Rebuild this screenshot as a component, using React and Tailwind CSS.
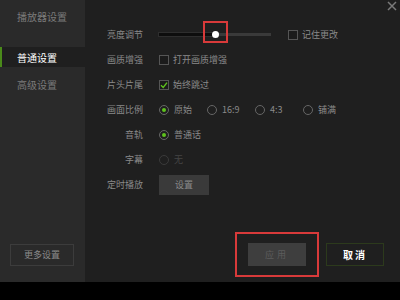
const font = { fontFamily: '"Noto Sans CJK SC", "Noto Sans", sans-serif' };

function Check({ checked }) {
  return (
    <span className="flex h-[10px] w-[10px] items-center justify-center border border-[#555] bg-[#1b1b1b]">
      {checked && (
        <svg width="8" height="8" viewBox="0 0 8 8">
          <path d="M1 4.2 L3.2 6.4 L7 1.6" fill="none" stroke="#5ec21d" strokeWidth="1.4" />
        </svg>
      )}
    </span>
  );
}

function Radio({ on, disabled }) {
  return (
    <span
      className={`flex h-[10px] w-[10px] items-center justify-center rounded-full border ${
        disabled ? "border-[#3a3a3a]" : "border-[#666]"
      }`}
    >
      {on && <span className="h-[4px] w-[4px] rounded-full bg-[#5ec21d]" />}
    </span>
  );
}

function Row({ label, children }) {
  return (
    <div className="flex h-[25px] items-center">
      <div className="w-[58px] text-right text-[9px] text-[#8a8a8a]">{label}</div>
      <div className="ml-[16px] flex items-center">{children}</div>
    </div>
  );
}

export default function App() {
  return (
    <div className="flex h-[300px] w-[400px] flex-col bg-black" style={font}>
      <div className="flex h-[282px]">
        {/* sidebar */}
        <div className="flex w-[85px] flex-col bg-[#2a2a2a]">
          <div className="h-[47px] pl-[17px] pt-[9px] text-[10px] text-[#7a7a7a]">播放器设置</div>
          <div className="flex h-[20px] items-center border-l-2 border-[#4a8a1a] bg-[#1f1f1f] pl-[15px] text-[10px] text-white">
            普通设置
          </div>
          <div className="flex h-[34px] items-center pl-[17px] text-[10px] text-[#7a7a7a]">高级设置</div>
          <div className="flex-1" />
          <div className="mb-[16px] ml-[10px] flex h-[22px] w-[64px] items-center justify-center border border-[#3c3c3c] text-[9px] text-[#8a8a8a]">
            更多设置
          </div>
        </div>

        {/* main */}
        <div className="relative flex flex-1 flex-col bg-[#1f1f1f] pt-[22px]">
          <svg className="absolute right-[3px] top-[1px]" width="10" height="10" viewBox="0 0 10 10">
            <path d="M1 1 L9 9 M9 1 L1 9" stroke="#7a7a7a" strokeWidth="1.5" />
          </svg>

          <Row label="亮度调节">
            <div className="relative flex h-[3px] w-[112px] items-center">
              <div className="h-[3px] w-[56px] bg-[#0d0d0d] ring-1 ring-[#2e2e2e]" />
              <div className="h-[3px] flex-1 bg-[#3a3a3a]" />
              <span className="absolute left-[53px] top-[-2px] h-[7px] w-[7px] rounded-full bg-white" />
              <span className="absolute left-[44px] top-[-12px] h-[22px] w-[25px] border-2 border-[#d83a3a]" />
            </div>
            <div className="ml-[17px] flex items-center gap-[4px]">
              <Check />
              <span className="text-[9px] text-[#8a8a8a]">记住更改</span>
            </div>
          </Row>
          <Row label="画质增强">
            <div className="flex items-center gap-[4px]">
              <Check />
              <span className="text-[9px] text-[#8a8a8a]">打开画质增强</span>
            </div>
          </Row>
          <Row label="片头片尾">
            <div className="flex items-center gap-[4px]">
              <Check checked />
              <span className="text-[9px] text-[#8a8a8a]">始终跳过</span>
            </div>
          </Row>
          <Row label="画面比例">
            <div className="flex items-center">
              <div className="flex w-[48px] items-center gap-[5px]">
                <Radio on />
                <span className="text-[9px] text-[#8a8a8a]">原始</span>
              </div>
              <div className="flex w-[48px] items-center gap-[5px]">
                <Radio />
                <span className="text-[9px] text-[#8a8a8a]">16:9</span>
              </div>
              <div className="flex w-[48px] items-center gap-[5px]">
                <Radio />
                <span className="text-[9px] text-[#8a8a8a]">4:3</span>
              </div>
              <div className="flex items-center gap-[5px]">
                <Radio />
                <span className="text-[9px] text-[#8a8a8a]">铺满</span>
              </div>
            </div>
          </Row>
          <Row label="音轨">
            <div className="flex items-center gap-[5px]">
              <Radio on />
              <span className="text-[9px] text-[#8a8a8a]">普通话</span>
            </div>
          </Row>
          <Row label="字幕">
            <div className="flex items-center gap-[5px]">
              <Radio disabled />
              <span className="text-[9px] text-[#444]">无</span>
            </div>
          </Row>
          <Row label="定时播放">
            <div className="flex h-[20px] w-[50px] items-center justify-center bg-[#3a3a3a] text-[9px] text-[#8a8a8a]">
              设置
            </div>
          </Row>

          <div className="flex-1" />
          <div className="mb-[5px] flex items-center justify-end pr-[16px]">
            <div className="flex h-[45px] w-[84px] items-center justify-center border-2 border-[#d83a3a]">
              <div className="flex h-[23px] w-[58px] items-center justify-center bg-[#3e3e3e] text-[9px] tracking-[3px] text-[#5c5c5c]">
                应用
              </div>
            </div>
            <div className="ml-[7px] flex h-[23px] w-[58px] items-center justify-center border border-[#2c3a1c] text-[10px] font-bold tracking-[2px] text-white">
              取消
            </div>
          </div>
        </div>
      </div>
      <div className="flex-1 bg-black" />
    </div>
  );
}
